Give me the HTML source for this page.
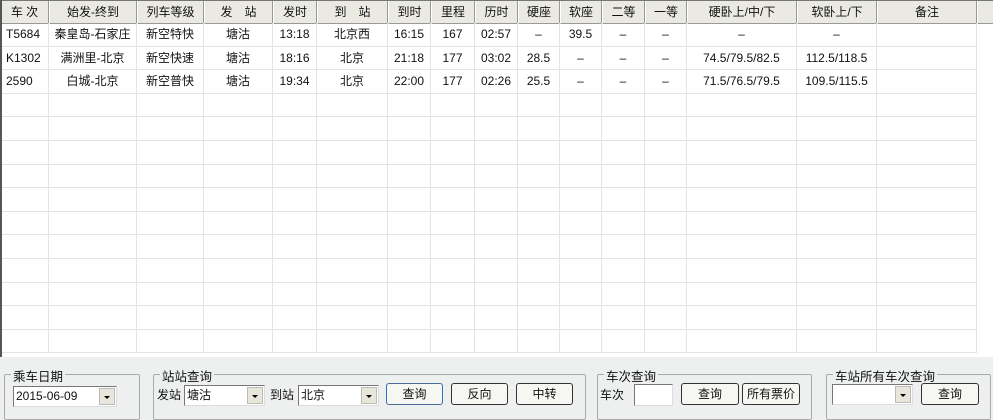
<!DOCTYPE html>
<html><head><meta charset="utf-8"><style>
body{margin:0;width:993px;height:416px;overflow:hidden;background:#eef0f0;font-family:"Liberation Sans","Noto Sans CJK SC",sans-serif;font-size:12px;color:#111;position:relative}
.tbl{position:absolute;left:0;top:0;width:993px;height:357px;background:#fff;overflow:hidden}
.lb{position:absolute;left:0;top:0;width:2px;height:357px;background:#555;z-index:5}
.row{position:absolute;left:0;height:24px;width:993px}
.c{position:absolute;top:0;height:100%;box-sizing:border-box;border-right:1px solid #e4e4e4;border-bottom:1px solid #e4e4e4;text-align:center;line-height:23px;white-space:nowrap}
.h .c{background:#ebeae2;border-right:1px solid #999;border-bottom:1px solid #999;border-left:1px solid #fff;line-height:22px}
.hd{height:23px;border-top:1px solid #777}
.gb{position:absolute;border:1px solid #aaa;border-radius:2px;box-sizing:border-box}
.gt{position:absolute;top:-9px;left:6px;background:#eef0f0;padding:0 2px;font-size:12.5px}
.combo{position:absolute;height:21px;background:#fff;border:1px solid #777;border-right-color:#ddd;border-bottom-color:#ddd;box-sizing:border-box;font-size:12px;line-height:19px;padding-left:2px}
.arr{position:absolute;right:1px;top:1px;width:16px;height:17px;background:#e8e6da;border:1px solid #bbb;box-sizing:border-box}
.arr:after{content:"";position:absolute;left:4px;top:7px;border-left:3px solid transparent;border-right:3px solid transparent;border-top:3px solid #000}
.btn{position:absolute;height:22px;border:1px solid #333;border-radius:3px;background:#f6f6f2;box-sizing:border-box;text-align:center;line-height:20px;font-size:12px}
.lbl{position:absolute;font-size:12px}
</style></head><body>
<div class="tbl">
<div class="lb"></div>
<div class="row h hd" style="top:0">
<div class="c" style="left:0;width:49px">车 次</div>
<div class="c" style="left:49px;width:88px">始发-终到</div>
<div class="c" style="left:137px;width:67px">列车等级</div>
<div class="c" style="left:204px;width:69px">发　站</div>
<div class="c" style="left:273px;width:44px">发时</div>
<div class="c" style="left:317px;width:71px">到　站</div>
<div class="c" style="left:388px;width:43px">到时</div>
<div class="c" style="left:431px;width:44px">里程</div>
<div class="c" style="left:475px;width:43px">历时</div>
<div class="c" style="left:518px;width:42px">硬座</div>
<div class="c" style="left:560px;width:42px">软座</div>
<div class="c" style="left:602px;width:43px">二等</div>
<div class="c" style="left:645px;width:42px">一等</div>
<div class="c" style="left:687px;width:110px">硬卧上/中/下</div>
<div class="c" style="left:797px;width:80px">软卧上/下</div>
<div class="c" style="left:877px;width:100px">备注</div>
<div class="c" style="left:977px;width:20px"></div>
</div>
<div id="rows"></div>
</div>
<script>
var L=[0,49,137,204,273,317,388,431,475,518,560,602,645,687,797,877,977,1000];
var D=[["T5684","秦皇岛-石家庄","新空特快","塘沽","13:18","北京西","16:15","167","02:57","–","39.5","–","–","–","–",""],
["K1302","满洲里-北京","新空快速","塘沽","18:16","北京","21:18","177","03:02","28.5","–","–","–","74.5/79.5/82.5","112.5/118.5",""],
["2590","白城-北京","新空普快","塘沽","19:34","北京","22:00","177","02:26","25.5","–","–","–","71.5/76.5/79.5","109.5/115.5",""]];
var h="";
for(var r=0;r<14;r++){var t=23+r*23.6;h+='<div class="row" style="top:'+t+'px;height:23.6px">';
for(var i=0;i<16;i++){var v=D[r]?D[r][i]:"";var st=i==0?"text-align:left;padding-left:6px;":"";h+='<div class="c" style="'+st+'left:'+L[i]+'px;width:'+(L[i+1]-L[i])+'px">'+v+'</div>';}
h+='</div>';}
document.getElementById("rows").innerHTML=h;
</script>
<div class="gb" style="left:4px;top:374px;width:136px;height:46px"><span class="gt">乘车日期</span></div>
<div class="combo" style="left:13px;top:386px;width:104px">2015-06-09<div class="arr"></div></div>
<div class="gb" style="left:153px;top:374px;width:433px;height:46px"><span class="gt">站站查询</span></div>
<span class="lbl" style="left:157px;top:386px">发站</span>
<div class="combo" style="left:184px;top:385px;width:81px">塘沽<div class="arr"></div></div>
<span class="lbl" style="left:270px;top:386px">到站</span>
<div class="combo" style="left:298px;top:385px;width:81px">北京<div class="arr"></div></div>
<div class="btn" style="left:386px;top:383px;width:57px;border-color:#4a6a9a">查询</div>
<div class="btn" style="left:451px;top:383px;width:57px">反向</div>
<div class="btn" style="left:516px;top:383px;width:57px">中转</div>
<div class="gb" style="left:597px;top:374px;width:215px;height:46px"><span class="gt">车次查询</span></div>
<span class="lbl" style="left:600px;top:386px">车次</span>
<div class="combo" style="left:634px;top:384px;width:39px;height:22px"></div>
<div class="btn" style="left:681px;top:383px;width:58px">查询</div>
<div class="btn" style="left:742px;top:383px;width:58px">所有票价</div>
<div class="gb" style="left:826px;top:374px;width:165px;height:46px"><span class="gt">车站所有车次查询</span></div>
<div class="combo" style="left:832px;top:384px;width:81px"><div class="arr"></div></div>
<div class="btn" style="left:921px;top:383px;width:58px">查询</div>
</body></html>
